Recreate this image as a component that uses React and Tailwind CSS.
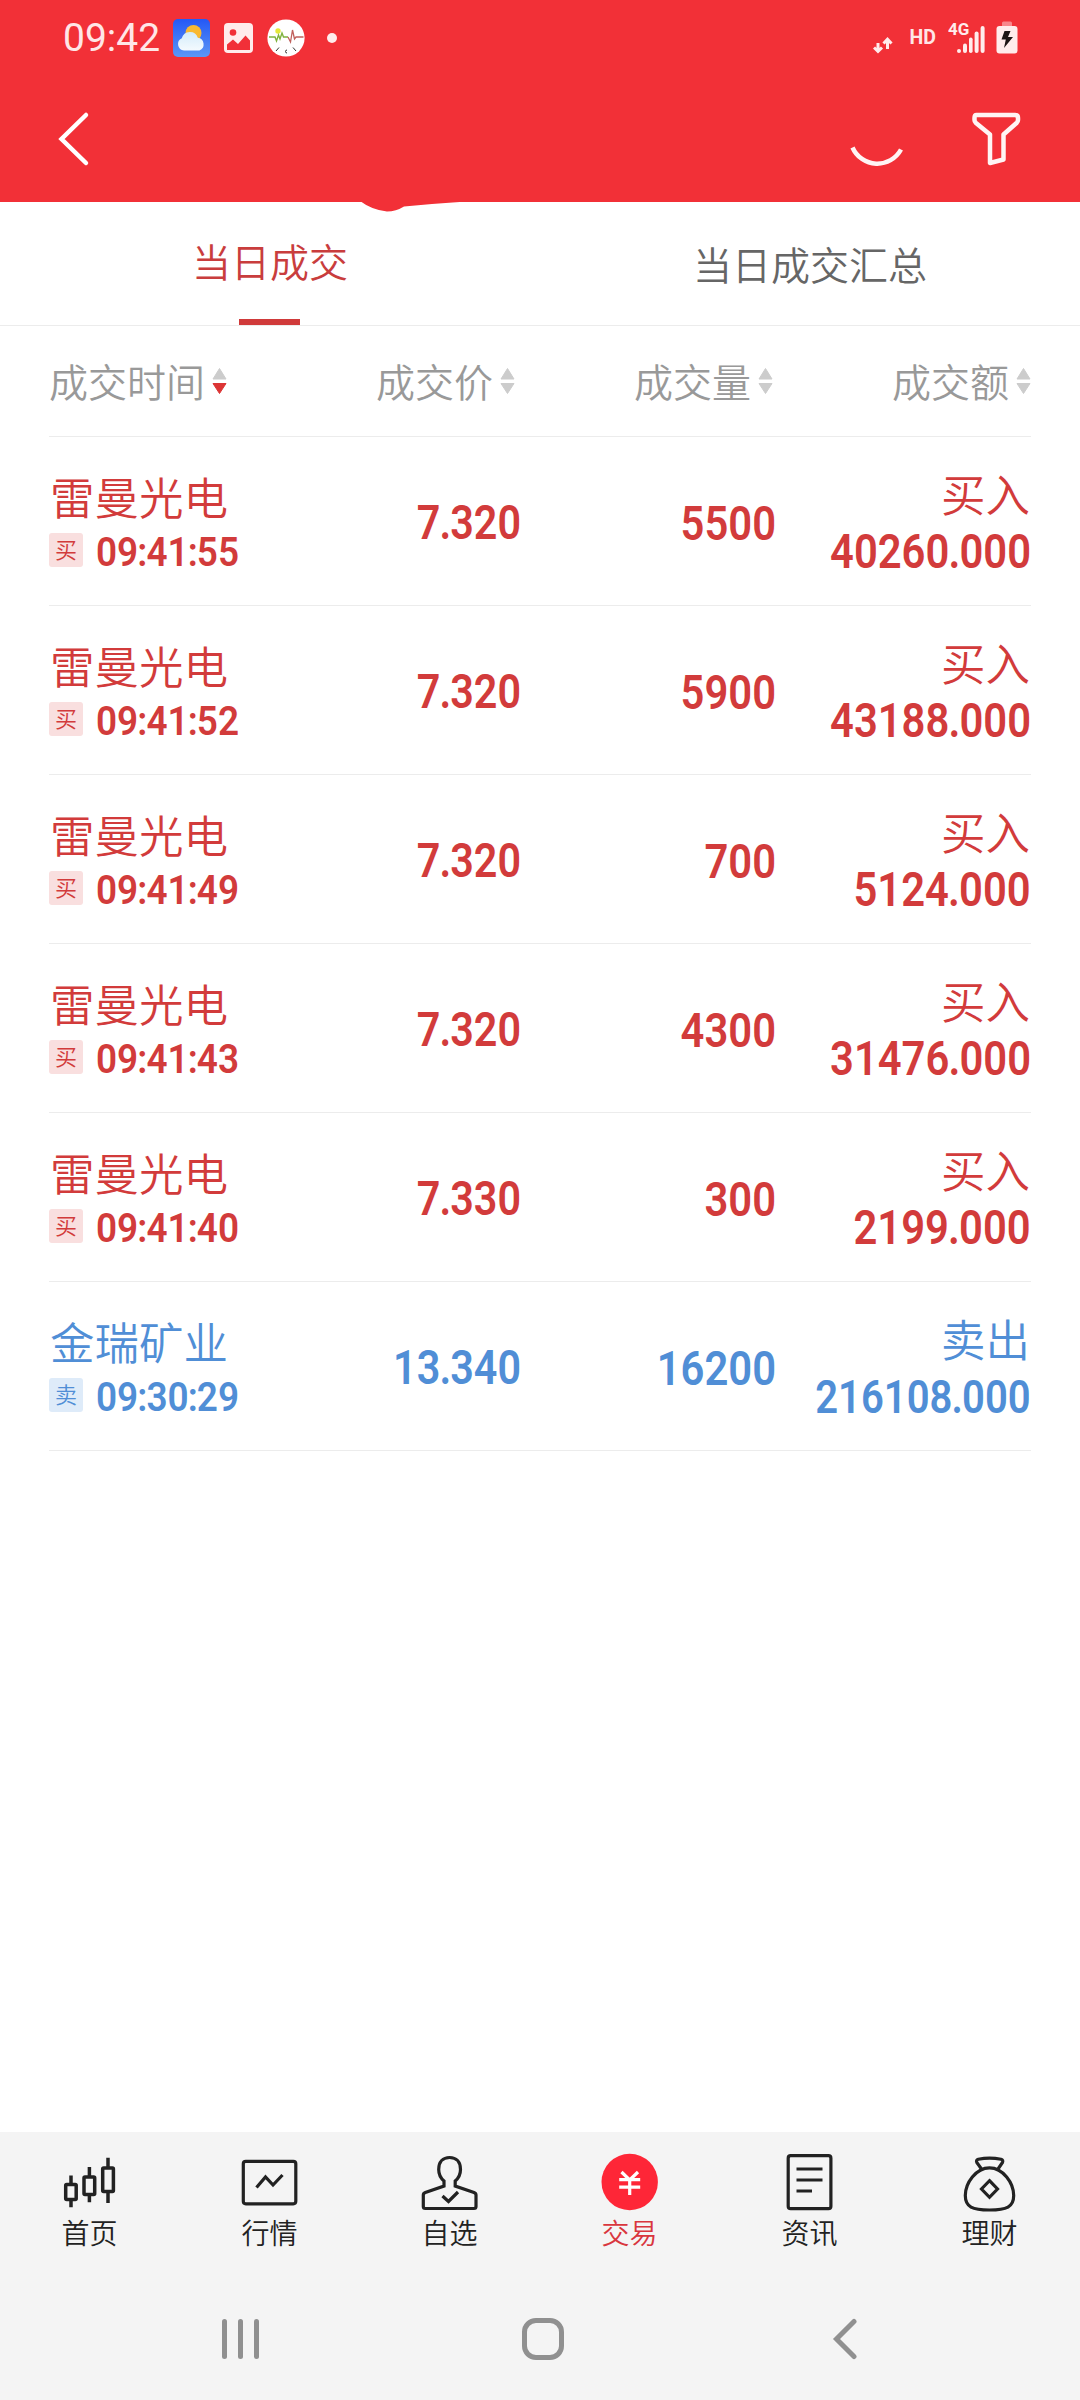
import React, { useState } from 'react'

const trades = [
    { name: '雷曼光电', time: '09:41:55', price: '7.320', volume: '5500', amount: '40260.000', side: 'buy' },
    { name: '雷曼光电', time: '09:41:52', price: '7.320', volume: '5900', amount: '43188.000', side: 'buy' },
    { name: '雷曼光电', time: '09:41:49', price: '7.320', volume: '700', amount: '5124.000', side: 'buy' },
    { name: '雷曼光电', time: '09:41:43', price: '7.320', volume: '4300', amount: '31476.000', side: 'buy' },
    { name: '雷曼光电', time: '09:41:40', price: '7.330', volume: '300', amount: '2199.000', side: 'buy' },
    { name: '金瑞矿业', time: '09:30:29', price: '13.340', volume: '16200', amount: '216108.000', side: 'sell' },
]

const StatusBar = () => {
    return (
        <div className="flex h-[76px] items-center pl-[62px] pr-[62px] font-[Roboto,sans-serif] font-normal text-[#ffe6e7]">
            <span className="w-[111px] pl-[1px] text-[39px] leading-[76px]">09:42</span>
            <svg className="h-[38px] w-[37px]" viewBox="0 0 37 38">
                <defs>
                    <linearGradient id="sky" x1="0" y1="0" x2="0" y2="1">
                        <stop offset="0" stopColor="#2458f5" />
                        <stop offset="1" stopColor="#5c97f6" />
                    </linearGradient>
                    <linearGradient id="cloud" x1="0" y1="0" x2="0" y2="1">
                        <stop offset="0" stopColor="#d3ecfb" />
                        <stop offset="1" stopColor="#f4fafe" />
                    </linearGradient>
                </defs>
                <rect width="37" height="38" rx="5" fill="url(#sky)" />
                <circle cx="20.500" cy="14" r="8" fill="#f9b931" />
                <path d="M11 31.500a6.400 6.400 0 0 1-2.200-12.200 8.300 8.300 0 0 1 16-.5 6.600 6.600 0 0 1 1.600 12.700z" fill="url(#cloud)" />
            </svg>
            <svg className="ml-[14px] h-[30px] w-[29px]" viewBox="0 0 29 30">
                <rect width="29" height="30" rx="4" fill="#ffecec" />
                <circle cx="9" cy="9.500" r="3.300" fill="#f13038" />
                <path d="M3 21.500l6-5 5 4.500 7.500-8.500 4.500 5V27H3z" fill="#f13038" />
            </svg>
            <svg className="ml-[13.500px] h-[38px] w-[38px]" viewBox="0 0 38 38">
                <circle cx="19" cy="19" r="18.600" fill="#fff" />
                <circle cx="11" cy="12" r="2.700" fill="#e5e83a" />
                <path d="M2 18h6l1.500 4 2-6 1.500 4 2-6 1.500 4H21" fill="none" stroke="#7fb23c" strokeWidth="1.400" />
                <path d="M21 18l2.500 5 2-12 2 9 1.500-2h7.500" fill="none" stroke="#c0605c" strokeWidth="1.300" />
                <path d="M9 32l3-3.500M26 28.500l3 3.500M20 31a1.500 1.500 0 1 0 0 3" fill="none" stroke="#333" strokeWidth="1" />
            </svg>
            <span className="ml-[22.500px] h-[10px] w-[10px] rounded-full bg-[#ffecec]"></span>

            <svg className="ml-auto h-[38px] w-[20px]" viewBox="0 0 20 38" fill="none" stroke="#ffecec" strokeWidth="3">
                <path d="M5 24v9M1 28.500l4 4 4-4M14.500 30V21M10.500 24.500l4-4.300 4 4.300" />
            </svg>
            <span className="ml-[16.500px] text-[19.500px] font-bold leading-none">HD</span>
            <svg className="ml-[12px] h-[38px] w-[38px]" viewBox="0 0 38 38">
                <text x="0" y="15.500" fontSize="17" fontWeight="700" fill="#ffecec">4G</text>
                <g fill="#ffecec">
                    <rect x="9" y="30" width="4" height="4" rx="2" />
                    <rect x="15" y="24.500" width="4" height="9.500" rx="2" />
                    <rect x="21" y="18.500" width="3.600" height="15.500" rx="1.800" />
                    <rect x="26.600" y="12.500" width="4" height="21.500" rx="2" />
                    <rect x="32.600" y="7" width="4" height="27" rx="2" />
                </g>
            </svg>
            <svg className="ml-[10px] h-[38px] w-[22px]" viewBox="0 0 22 38">
                <rect x="6" y="2.500" width="10" height="6" rx="1.500" fill="#f8868b" />
                <rect x="0.500" y="7" width="21" height="27.500" rx="3" fill="#ffecec" />
                <path d="M8.500 12h6l-2.500 6h5L8 29l1.800-8.500H5.500z" fill="#1d1414" />
            </svg>
        </div>
    )
}

const Header = () => {
    return (
        <div className="relative h-[202px] bg-[#f23037]">
            <StatusBar />
            <div className="flex items-center px-[56px] pt-[34px]">
                <svg className="h-[58px] w-[36px]" viewBox="0 0 36 58" fill="none" stroke="#fff" strokeWidth="4.500">
                    <path d="M30 5L5.500 29 30 53" strokeLinecap="round" />
                </svg>
                {/* lower half of the refresh ring */}
                <svg className="ml-auto h-[58px] w-[56px]" viewBox="0 0 56 58" fill="none" stroke="#fff4f4" strokeWidth="4.500">
                    <path d="M3.500 37.500A27 27 0 0 0 52 39.500" />
                </svg>
                <svg className="ml-[65px] h-[58px] w-[54px]" viewBox="0.5 0 54 58" fill="none" stroke="#fff4f4" strokeWidth="4.500" strokeLinejoin="round">
                    <path d="M7 5h38.500q3 0 3 3v2q0 1.500-1.200 2.700L34 24.500v25L20.500 53V24.500L6.200 12.700Q5 11.500 5 10V8q0-3 2-3z" />
                </svg>
            </div>
            <svg className="absolute left-[360px] top-[201px] h-[12px] w-[114px]" viewBox="0 0 114 12">
                <path d="M0 0q12 9 27 10.500 9 0 17-5Q58 4 72 3 92 1.500 114 0z" fill="#f23037" />
            </svg>
        </div>
    )
}

const SortArrows = ({ active }) => {
    return (
        <svg className="h-[28px] w-[15px]" viewBox="0 0 15 28">
            <path d="M7.500 1.500L14 12H1z" fill="#ccc" stroke="#ccc" strokeLinejoin="round" />
            <path d="M1 16.500h13L7.500 26.500z" fill={active ? '#dc3535' : '#ccc'} stroke={active ? '#dc3535' : '#ccc'} strokeLinejoin="round" />
        </svg>
    )
}

// narrow figures, with the points and colons set tighter than the digits
const Figures = ({ value, className }) => {
    return (
        <span className={`inline-block whitespace-nowrap font-[Roboto,sans-serif] font-semibold ${className}`}>
            {value.split(/([.:])/).map((part, i) => (
                part === '.' || part === ':'
                    ? <span key={i} className="mx-[-1px]">{part}</span>
                    : part
            ))}
        </span>
    )
}

const TradeRow = ({ trade }) => {
    const buy = trade.side === 'buy'
    return (
        <div className={`grid h-[169px] grid-cols-[216px_256px_255px_255px] border-b border-[#ececec] ${buy ? 'text-[#d23b3b]' : 'text-[#508ed6]'}`}>
            <div className="pt-[32px]">
                <h3 className="pl-[1px] text-[44.500px] leading-[54px]">{trade.name}</h3>
                <div className="mt-[10px] flex h-[34px] items-center">
                    <span className={`w-[34px] shrink-0 rounded-[3px] pb-[3px] text-center text-[22px] leading-[31px] ${buy ? 'bg-[#f9dfdf]' : 'bg-[#deebf9]'}`}>
                        {buy ? '买' : '卖'}
                    </span>
                    <Figures value={trade.time} className="ml-[13px] origin-left scale-x-[0.9] pt-[3px] text-[41px] leading-[34px]" />
                </div>
            </div>
            <Figures value={trade.price} className="origin-right scale-x-[0.860] self-center pt-[3px] text-right text-[48px] leading-[56px]" />
            <Figures value={trade.volume} className="origin-right scale-x-[0.870] self-center pt-[5px] text-right text-[48px] leading-[56px]" />
            <div className="flex flex-col items-end pt-[29px]">
                <span className="pr-[1px] text-[44.500px] leading-[54px]">{buy ? '买入' : '卖出'}</span>
                <Figures
                    value={trade.amount}
                    className={`mt-[8px] origin-right scale-x-[0.870] leading-[48px] ${trade.amount.length > 9 ? 'text-[46px]' : 'text-[48px]'}`}
                />
            </div>
        </div>
    )
}

const navItems = [
    {
        label: '首页',
        icon: (
            <g strokeWidth="3.500">
                <rect x="5.700" y="32.500" width="10.500" height="15" rx="1" />
                <path d="M11 23.500V32M11 48v7.300" />
                <rect x="24" y="25" width="10.700" height="17.500" rx="1" />
                <path d="M29.400 15v9M29.400 43v7.300" />
                <rect x="42.700" y="16" width="10.700" height="23.500" rx="1" />
                <path d="M48 5.700V15M48 40v11" />
            </g>
        ),
    },
    {
        label: '行情',
        icon: (
            <g>
                <rect x="3.300" y="9.300" width="52.500" height="42.500" rx="2.500" />
                <path d="M16.500 35.500l9-10.500 7.500 8 9.500-10" />
            </g>
        ),
    },
    {
        label: '自选',
        icon: (
            <g>
                <path d="M24 34v-5C20.500 26 18.700 22.500 18.700 17.500 18.700 10 23 5.500 29.600 5.500S40.500 10 40.500 17.500C40.500 22.500 38.700 26 35.200 29v5L54 40.500q2 .8 2 2.500v11.500q0 2-2 2H5.300q-2 0-2-2V43q0-1.700 2-2.500z" />
                <path d="M22.500 44l6 5.500L38 40" />
            </g>
        ),
    },
    {
        label: '交易',
        active: true,
        icon: (
            <g>
                <circle cx="29.700" cy="30" r="28.200" fill="#fe2637" stroke="none" />
                <path d="M21.500 20l8.200 8 8.300-8M29.700 27v16M19.200 27.600h21M19.200 35.200h21" stroke="#fff" />
            </g>
        ),
    },
    {
        label: '资讯',
        icon: (
            <g>
                <rect x="8.200" y="3.700" width="42.700" height="53" rx="2.500" />
                <path d="M16.500 17h26M16.500 28h26M16.500 39H32" />
            </g>
        ),
    },
    {
        label: '理财',
        icon: (
            <g>
                <path d="M21.500 17l-4.700-6.500q-1-2.500 1.500-3.300Q29.500 5 41 7.200q2.500.8 1.500 3.300L38 17" />
                <path d="M29.500 15.800C43 15.800 53.700 31 53.700 43.500 53.700 55 46.500 58 29.500 58S5.300 55 5.300 43.500C5.300 31 16 15.800 29.500 15.800z" />
                <path d="M29.500 28.700l8 8.300-8 8.300-8-8.300z" />
            </g>
        ),
    },
]

const App = () => {
    const [tab, setTab] = useState('today')

    return (
        <div className="flex h-[2400px] w-[1080px] flex-col overflow-hidden bg-white font-['Noto_Sans_CJK_SC',sans-serif] font-[350]">
            <Header />

            <div className="grid h-[124px] grid-cols-2 border-b border-[#ececec] text-center text-[39px]">
                <button className="flex flex-col items-center justify-between pt-[30px] text-[#c93d3d]" onClick={() => setTab('today')}>
                    <span className="leading-[56px]">当日成交</span>
                    {tab === 'today' && <span className="mr-[2px] h-[6px] w-[61px] bg-[#d03a3a]"></span>}
                </button>
                <button className="flex flex-col items-center justify-between pt-[33px] text-[#666]" onClick={() => setTab('summary')}>
                    <span className="leading-[56px]">当日成交汇总</span>
                    {tab === 'summary' && <span className="mr-[2px] h-[6px] w-[61px] bg-[#d03a3a]"></span>}
                </button>
            </div>

            <div className="px-[49px]">
                <div className="grid h-[111px] grid-cols-[208px_258px_258px_258px] border-b border-[#ececec] text-[39px] leading-[60px] text-[#999]">
                    <div className="flex items-center gap-[7px]"><span className="pb-[3px]">成交时间</span><SortArrows active /></div>
                    <div className="flex items-center justify-end gap-[7px]"><span className="pb-[3px]">成交价</span><SortArrows /></div>
                    <div className="flex items-center justify-end gap-[7px]"><span className="pb-[3px]">成交量</span><SortArrows /></div>
                    <div className="flex items-center justify-end gap-[7px]"><span className="pb-[3px]">成交额</span><SortArrows /></div>
                </div>
                {trades.map((trade) => (
                    <TradeRow key={trade.time} trade={trade} />
                ))}
            </div>

            <div className="mt-auto h-[268px] bg-[#f4f4f4]">
                <div className="grid h-[147px] grid-cols-6 pt-[20px]">
                    {navItems.map((item) => (
                        <div key={item.label} className={`flex flex-col items-center text-[28px] leading-[40px] ${item.active ? 'text-[#d9363e]' : 'text-[#222]'}`}>
                            <svg className="h-[60px] w-[60px]" viewBox="0 0 60 60" fill="none" stroke="#222" strokeWidth="3.200">
                                {item.icon}
                            </svg>
                            <span className="pr-[1px]">{item.label}</span>
                        </div>
                    ))}
                </div>
                <div className="flex h-[120px] items-center pl-[90px] text-[#909090]">
                    <div className="flex w-[302px] justify-center gap-[11px] pr-[1px]">
                        <span className="h-[40px] w-[5px] rounded-full bg-[#909090]"></span>
                        <span className="h-[40px] w-[5px] rounded-full bg-[#909090]"></span>
                        <span className="h-[40px] w-[5px] rounded-full bg-[#909090]"></span>
                    </div>
                    <div className="flex w-[302px] justify-center">
                        <span className="h-[42px] w-[42px] rounded-[14px] border-[5px] border-[#909090]"></span>
                    </div>
                    <div className="flex w-[302px] justify-center">
                        <svg className="h-[42px] w-[26px]" viewBox="0 0 26 42" fill="none" stroke="currentColor" strokeWidth="5">
                            <path d="M22 3.500L4.500 21 22 38.500" strokeLinecap="round" />
                        </svg>
                    </div>
                </div>
            </div>
        </div>
    )
}

export default App
